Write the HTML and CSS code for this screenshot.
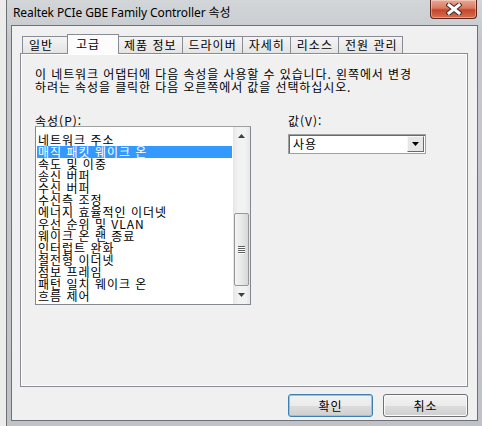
FILE: index.html
```html
<!DOCTYPE html>
<html lang="ko">
<head>
    <meta charset="UTF-8">
    <title>Realtek PCIe GBE Family Controller 속성</title>
    <link rel="stylesheet" href="styles.css">
</head>
<body>
    <div class="window">
        <div class="titlebar">
            <span class="title">Realtek PCIe GBE Family Controller 속성</span>
            <div class="close-btn">
                <svg width="16" height="12" viewBox="0 0 16 12">
                    <path d="M3 2 L13 10 M13 2 L3 10" stroke="#3b2a26" stroke-width="5" stroke-linecap="square"/>
                    <path d="M3 2 L13 10 M13 2 L3 10" stroke="#ffffff" stroke-width="3" stroke-linecap="square"/>
                </svg>
            </div>
        </div>
        <div class="client">
            <div class="tabs">
                <div class="tab">일반</div>
                <div class="tab active">고급</div>
                <div class="tab">제품 정보</div>
                <div class="tab">드라이버</div>
                <div class="tab">자세히</div>
                <div class="tab">리소스</div>
                <div class="tab">전원 관리</div>
            </div>
            <div class="panel">
                <p class="desc">이 네트워크 어댑터에 다음 속성을 사용할 수 있습니다. 왼쪽에서 변경<br>하려는 속성을 클릭한 다음 오른쪽에서 값을 선택하십시오.</p>
                <div class="fields">
                    <div class="prop-col">
                        <div class="field-label">속성(P):</div>
                        <div class="listbox">
                            <ul class="items">
                                <li>네트워크 주소</li>
                                <li class="selected">매직 패킷 웨이크 온</li>
                                <li>속도 및 이중</li>
                                <li>송신 버퍼</li>
                                <li>수신 버퍼</li>
                                <li>수신측 조정</li>
                                <li>에너지 효율적인 이더넷</li>
                                <li>우선 순위 및 VLAN</li>
                                <li>웨이크 온 랜 종료</li>
                                <li>인터럽트 완화</li>
                                <li>절전형 이더넷</li>
                                <li>점보 프레임</li>
                                <li>패턴 일치 웨이크 온</li>
                                <li>흐름 제어</li>
                            </ul>
                            <div class="scrollbar">
                                <div class="sb-arrow">
                                    <svg width="7" height="4" viewBox="0 0 7 4"><polygon points="3.5,0 7,4 0,4" fill="#404040"/></svg>
                                </div>
                                <div class="sb-track-top"></div>
                                <div class="sb-thumb">
                                    <div class="grip"></div>
                                    <div class="grip"></div>
                                    <div class="grip"></div>
                                    <div class="grip"></div>
                                </div>
                                <div class="sb-arrow">
                                    <svg width="7" height="4" viewBox="0 0 7 4"><polygon points="0,0 7,0 3.5,4" fill="#404040"/></svg>
                                </div>
                            </div>
                        </div>
                    </div>
                    <div class="value-col">
                        <div class="field-label">값(V):</div>
                        <div class="combo">
                            <span class="combo-text">사용</span>
                            <div class="combo-btn">
                                <svg width="7" height="4" viewBox="0 0 7 4"><polygon points="0,0 7,0 3.5,4" fill="#000"/></svg>
                            </div>
                        </div>
                    </div>
                </div>
            </div>
            <div class="buttons">
                <button class="btn default">확인</button>
                <button class="btn">취소</button>
            </div>
        </div>
    </div>
</body>
</html>
```

FILE: styles.css
```css
body {
    margin: 0;
    width: 482px;
    height: 426px;
    overflow: hidden;
    display: flex;
    background: linear-gradient(90deg, #ececec, #d8d8d8);
    font-family: "Noto Sans CJK KR", sans-serif;
    font-size: 12px;
    letter-spacing: 1px;
    color: #000;
}

.window {
    margin-left: 6px;
    width: 476px;
    height: 426px;
    box-sizing: border-box;
    border-left: 1px solid #707070;
    padding: 0 4px 5px 4px;
    background: linear-gradient(#d3d6d9, #c4c8cc 40px, #bfc3c7);
    display: flex;
    flex-direction: column;
}

.titlebar {
    height: 25px;
    flex: none;
    display: flex;
    align-items: flex-start;
}

.title {
    font-family: "Noto Sans", "Noto Sans CJK KR", sans-serif;
    font-size: 12px;
    letter-spacing: -0.1px;
    line-height: 16px;
    padding: 5px 0 0 2px;
}

.close-btn {
    margin-left: auto;
    margin-right: 1px;
    width: 47px;
    height: 19px;
    box-sizing: border-box;
    border: 1px solid #5e2419;
    border-top: none;
    border-radius: 0 0 4px 4px;
    background: linear-gradient(#e9a894, #d97a62 45%, #c5462c 55%, #d5704f);
    box-shadow: inset 0 0 0 1px rgba(255, 255, 255, 0.35);
    display: flex;
    align-items: center;
    justify-content: center;
}

.client {
    height: 396px;
    box-sizing: border-box;
    border: 1px solid #6d7074;
    background: #f0f0f0;
    padding: 8px 9px 0 8px;
    display: flex;
    flex-direction: column;
}

.tabs {
    height: 19px;
    flex: none;
    display: flex;
    align-items: flex-start;
    padding-left: 2px;
    position: relative;
    z-index: 1;
}

.tab {
    margin-top: 2px;
    height: 17px;
    min-width: 48px;
    box-sizing: border-box;
    border: 1px solid #898c95;
    border-bottom: none;
    padding: 0 5px 0 6px;
    line-height: 16px;
    background: linear-gradient(#f4f4f4, #e4e4e4);
}

.tab + .tab {
    margin-left: -1px;
}

.tab.active {
    margin-top: 0;
    height: 20px;
    margin-left: -3px;
    margin-right: -2px;
    padding: 0 7px 0 8px;
    min-width: 52px;
    background: #fcfcfc;
    line-height: 17px;
    position: relative;
    z-index: 2;
}

.tab.active + .tab {
    margin-left: 0;
}

.panel {
    height: 334px;
    flex: none;
    box-sizing: border-box;
    border: 1px solid #898c95;
    box-shadow: inset 1px 1px 0 #ffffff, inset -1px -1px 0 #ffffff;
    background: #f0f0f0;
    padding: 13px 14px;
}

.desc {
    margin: 0;
    line-height: 13px;
    white-space: nowrap;
    letter-spacing: 0.9px;
}

.fields {
    margin-top: 22px;
    display: flex;
    gap: 37px;
}

.field-label {
    line-height: 11px;
    height: 11px;
}

.listbox {
    width: 216px;
    height: 179px;
    box-sizing: border-box;
    border: 1px solid #828790;
    border-top-color: #a0a0a0;
    background: #fff;
    display: flex;
}

.items {
    flex: 1;
    margin: 0;
    padding: 7px 0 0 0;
    list-style: none;
    overflow: hidden;
}

.items li {
    margin: 0 1px;
    padding-left: 1px;
    height: 12px;
    line-height: 12px;
    white-space: nowrap;
}

.items li.selected {
    background: #3399ff;
    color: #fff;
}

.scrollbar {
    width: 17px;
    flex: none;
    display: flex;
    flex-direction: column;
    background: linear-gradient(90deg, #e6e6e6, #f2f2f2 30%, #f2f2f2 70%, #e8e8e8);
}

.sb-arrow {
    height: 17px;
    flex: none;
    display: flex;
    align-items: center;
    justify-content: center;
}

.sb-track-top {
    height: 69px;
    flex: none;
}

.sb-thumb {
    height: 73px;
    margin: 0 1px;
    box-sizing: border-box;
    border: 1px solid #979797;
    border-radius: 2px;
    background: linear-gradient(90deg, #f4f4f4, #e8e8e8 50%, #d8d8d8);
    display: flex;
    flex-direction: column;
    align-items: center;
    justify-content: center;
    gap: 1px;
}

.grip {
    width: 7px;
    height: 1px;
    background: #5f5f5f;
    box-shadow: 0 1px 0 #ffffff;
}

.value-col {
    display: flex;
    flex-direction: column;
}

.combo {
    margin-top: 8px;
    width: 138px;
    height: 20px;
    box-sizing: border-box;
    border: 1px solid #a0a0a0;
    box-shadow: inset 1px 1px 0 #696969;
    background: #fff;
    display: flex;
    align-items: center;
    padding: 1px 1px 1px 2px;
}

.combo-text {
    flex: 1;
    padding-left: 2px;
    line-height: 16px;
}

.combo-btn {
    width: 17px;
    height: 16px;
    box-sizing: border-box;
    border: 1px solid;
    border-color: #f8f8f8 #6a6a6a #6a6a6a #f8f8f8;
    background: #e6e6e6;
    display: flex;
    align-items: center;
    justify-content: center;
}

.buttons {
    margin-top: 7px;
    display: flex;
    justify-content: flex-end;
    gap: 10px;
}

.btn {
    width: 85px;
    height: 23px;
    border: 1px solid #707070;
    border-radius: 3px;
    background: linear-gradient(#f2f2f2, #ebebeb 50%, #dddddd 50%, #cfcfcf);
    box-shadow: inset 0 0 0 1px #fbfbfb;
    font-family: "Noto Sans CJK KR", sans-serif;
    font-size: 12px;
    letter-spacing: 1px;
    line-height: 18px;
    padding: 0;
    color: #000;
}

.btn.default {
    border-color: #3c7fb1;
    box-shadow: inset 0 0 0 1px #74d1f6;
}
```
